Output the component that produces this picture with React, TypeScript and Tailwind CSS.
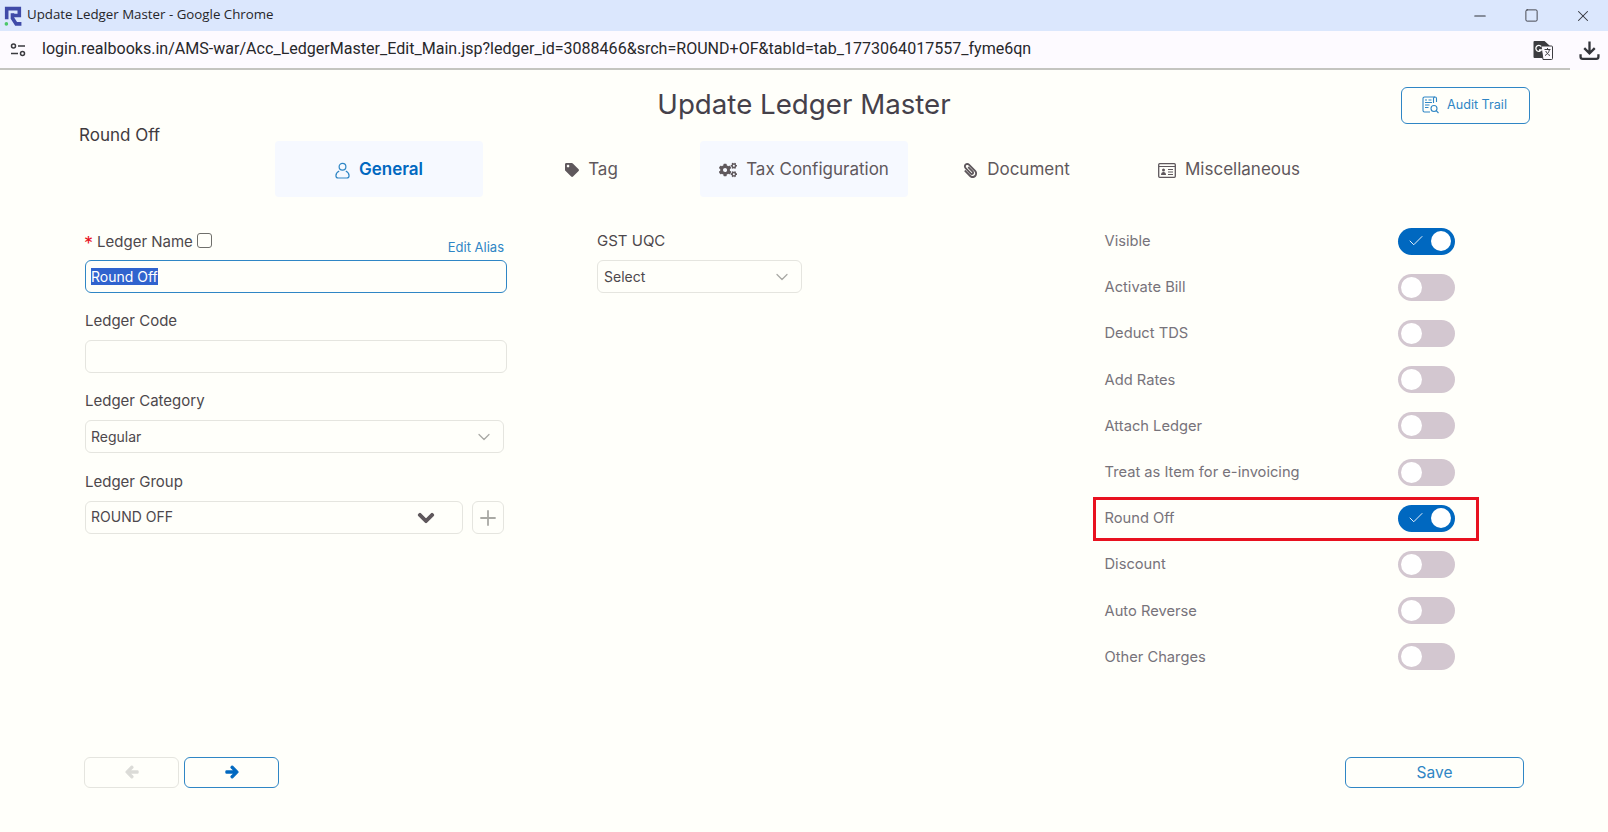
import React from "react";
import { ChevronDown, Check, Minus, Square, X, Plus } from "lucide-react";
import { FaTag, FaCogs, FaPaperclip, FaChevronDown, FaArrowLeft, FaArrowRight } from "react-icons/fa";

const tabs = [
  { label: "General", icon: <UserIcon />, active: true, shaded: true },
  { label: "Tag", icon: <FaTag className="w-[14px] h-[14px] text-[#5f585c]" /> },
  { label: "Tax Configuration", icon: <FaCogs className="w-[18px] h-[18px] text-[#5f585c]" />, shaded: true },
  { label: "Document", icon: <FaPaperclip className="w-[15px] h-[15px] text-[#5f585c] -scale-x-100" /> },
  { label: "Miscellaneous", icon: <CardIcon /> },
];

const switches = [
  { label: "Visible", on: true },
  { label: "Activate Bill" },
  { label: "Deduct TDS" },
  { label: "Add Rates" },
  { label: "Attach Ledger" },
  { label: "Treat as Item for e-invoicing" },
  { label: "Round Off", on: true, marked: true },
  { label: "Discount" },
  { label: "Auto Reverse" },
  { label: "Other Charges" },
];

function UserIcon() {
  return (
    <svg viewBox="0 0 16 18" className="w-[15px] h-[17px] text-[#2f86c5]" fill="none" stroke="currentColor" strokeWidth="1.3">
      <circle cx="8" cy="5" r="3.6" />
      <path d="M4.5 9.5C2.5 10.5 1 12.500 1 14.500c0 1.500 1 2.500 2.500 2.500h9c1.500 0 2.500-1 2.500-2.500 0-2-1.500-4-3.500-5" />
    </svg>
  );
}

function CardIcon() {
  return (
    <svg viewBox="0 0 18 15" className="w-[18px] h-[15px] text-[#5f585c]" fill="none" stroke="currentColor">
      <rect x="0.700" y="0.700" width="16.600" height="13.600" rx="1" strokeWidth="1.300" />
      <path d="M1 3.500h16" strokeWidth="1" />
      <circle cx="5.500" cy="7" r="1.500" fill="currentColor" stroke="none" />
      <path d="M3 12c0-2 1-3 2.500-3S8 10 8 12z" fill="currentColor" stroke="none" />
      <path d="M10 6.500h5M10 9h5M10 11.500h5" strokeWidth="1.100" />
    </svg>
  );
}

function Logo() {
  return (
    <svg viewBox="0 0 17 19" className="w-[18px] h-[20px]" fill="none" stroke="#3f4aa8" strokeWidth="3.400">
      <path d="M2.500 12.500V2.500h12v6.500H8" />
      <path d="M8 7v4.500l3.500 5.500h5" />
      <circle cx="2.200" cy="17" r="1.700" fill="#4cc76a" stroke="none" />
    </svg>
  );
}

function SiteInfoIcon() {
  return (
    <svg viewBox="0 0 16 14" className="w-[16px] h-[14px] text-[#3a3a3f]" fill="none" stroke="currentColor" strokeWidth="1.5">
      <circle cx="3.500" cy="3" r="2" />
      <path d="M8 3h7M1 10.500h7" />
      <circle cx="12.500" cy="10.500" r="2" />
    </svg>
  );
}

function TranslateIcon() {
  return (
    <svg viewBox="0 0 20 20" className="w-[20px] h-[20px]">
      <path d="M1.500 1h10l5 4.500V17a1 1 0 0 1-1 1H1.500a1 1 0 0 1-1-1V2a1 1 0 0 1 1-1z" fill="#3c3c40" />
      <path d="M8 6h10.500a1 1 0 0 1 1 1v11.500a1 1 0 0 1-1 1H10z" fill="#fdfaff" stroke="#3c3c40" strokeWidth="1" />
      <path d="M8.200 6.500a3 3 0 1 0 .2 3.500H6" fill="none" stroke="#fff" strokeWidth="1.300" />
      <path d="M11.500 9.500h6M14.500 8v1.500M16.500 9.500c-.6 3-2.500 5-4.500 6M12.800 11c.6 2 2.200 3.700 4.200 4.500" fill="none" stroke="#3c3c40" strokeWidth="1" />
    </svg>
  );
}

function DownloadIcon() {
  return (
    <svg viewBox="0 0 20 20" className="w-[21px] h-[21px] text-[#33343a]" fill="none" stroke="currentColor" strokeWidth="2.200">
      <path d="M10 1.500v11M5 7.800l5 5 5-5" />
      <path d="M1.500 13.500v2.500a2 2 0 0 0 2 2h13a2 2 0 0 0 2-2v-2.500" />
    </svg>
  );
}

function AuditIcon() {
  return (
    <svg viewBox="0 0 17 18" className="w-[17px] h-[18px] text-[#2f86c5]" fill="none" stroke="currentColor" strokeWidth="1.1">
      <path d="M11.500 7V2.500a1.500 1.500 0 0 1 3 0V6" />
      <path d="M13 1H2.500A1.500 1.500 0 0 0 1 2.500v12A1.500 1.500 0 0 0 2.500 16H8" />
      <path d="M3 4h2M6.500 4h3M3 6.500h7M3 9h4.500M3 11.500h3.500" />
      <circle cx="12" cy="12.500" r="3" />
      <path d="M14.200 14.700 16.500 17" />
    </svg>
  );
}

function Label({ children }: { children: React.ReactNode }) {
  return <div className="h-5 leading-5 text-[15px] text-[#4d484c]">{children}</div>;
}

function SelectBox({ value, wide }: { value: string; wide?: string }) {
  return (
    <div className={`${wide} h-[33px] mt-[9px] px-[6px] flex items-center justify-between border border-[#e5e5df] rounded-[6px] text-sm text-[#4d484c]`}>
      <span>{value}</span>
      <ChevronDown className="w-[20px] h-[20px] mr-[3px] text-[#a9a9a4]" strokeWidth={1.5} />
    </div>
  );
}

function Toggle({ on }: { on?: boolean }) {
  if (on) {
    return (
      <div className="w-[57px] h-[27px] rounded-full bg-[#0068c0] flex items-center justify-between pl-[9px] pr-[4px]">
        <Check className="w-[18px] h-[18px] text-white" strokeWidth={1.2} />
        <div className="w-[20px] h-[20px] rounded-full bg-white" />
      </div>
    );
  }
  return (
    <div className="w-[57px] h-[27px] rounded-full bg-[#d3c7d0] flex items-center pl-[3px]">
      <div className="w-[21px] h-[21px] rounded-full bg-white" />
    </div>
  );
}

export default function App() {
  return (
    <div className="w-[1608px] h-[832px] overflow-hidden flex flex-col bg-[#fffffa] font-['Inter',sans-serif]">
      {/* Chrome window bar */}
      <div className="h-[31px] flex items-center bg-[#dbe7fd] pl-[4px] font-['Open_Sans',sans-serif] text-[13.300px] text-[#26262a]">
        <Logo />
        <span className="ml-[5px] -mt-[2px]">Update Ledger Master - Google Chrome</span>
        <div className="ml-auto flex items-center gap-[35px] pr-[16px] text-[#33343a]">
          <Minus className="w-[18px] h-[18px]" strokeWidth={1.4} />
          <Square className="w-[15px] h-[15px]" strokeWidth={1.4} />
          <X className="w-[18px] h-[18px]" strokeWidth={1.4} />
        </div>
      </div>
      <div className="h-[39px] flex items-center bg-[#fdfaff] border-b-2 border-[#c4c4c0]">
        <div className="ml-[10px] mr-[16px]">
          <SiteInfoIcon />
        </div>
        <span className="font-['Roboto',sans-serif] text-[16.060px] text-[#27272b]">
          login.realbooks.in/AMS-war/Acc_LedgerMaster_Edit_Main.jsp?ledger_id=3088466&amp;srch=ROUND+OF&amp;tabId=tab_1773064017557_fyme6qn
        </span>
        <div className="ml-auto mr-[55px]">
          <TranslateIcon />
        </div>
      </div>
      <div className="absolute left-[1570px] top-[31px] w-[38px] h-[39px] bg-[#fdfaff] flex items-center justify-center">
        <DownloadIcon />
      </div>

      <main className="flex-1 flex flex-col">
        {/* Title row */}
        <div className="mt-[15px] h-[37px] grid grid-cols-[1fr_auto_1fr] items-center px-[78px]">
          <div />
          <h1 className="text-[27.700px] text-[#45414a] -mt-[1px]">Update Ledger Master</h1>
          <div className="flex justify-end">
            <button className="w-[129px] h-[37px] flex items-center justify-center gap-[8px] pr-[2px] border border-[#2f86c5] rounded-[6px] text-[12.600px] text-[#2f86c5]">
              <AuditIcon />
              Audit Trail
            </button>
          </div>
        </div>

        {/* Name and tabs */}
        <div className="flex pl-[79px]">
          <div className="w-[196px] mt-[3px] h-5 leading-5 text-[17px] text-[#3f3b40]">Round Off</div>
          <div className="mt-[19px] flex gap-[4.500px]">
            {tabs.map((t) => (
              <div
                key={t.label}
                className={`w-[208px] h-[56px] pt-[2px] flex items-center justify-center gap-[9px] rounded-[4px] text-[17px] ${
                  t.shaded ? "bg-[#f6f9ff]" : ""
                } ${t.active ? "text-[#0068c0] font-semibold" : "text-[#5f585c]"}`}
              >
                {t.icon}
                {t.label}
              </div>
            ))}
          </div>
        </div>

        <div className="flex pl-[85px]">
          {/* Left fields */}
          <div className="w-[422px] pt-[35px]">
            <div className="flex items-center h-5 text-[15px] text-[#4d484c]">
              <span className="text-[#e8111f] text-[18px] mt-[2px] mr-[4px] -ml-[1px]">*</span>
              Ledger Name
              <span className="ml-[4px] -mt-[3px] w-[15px] h-[15px] border border-[#6f6f6b] rounded-[3px]" />
              <span className="ml-auto mt-[11px] mr-[3px] text-[13px] text-[#2f86c5]">Edit Alias</span>
            </div>
            <div className="h-[33px] mt-[8px] px-[5px] flex items-center border-[1.500px] border-[#2f86c5] rounded-[6px]">
              <span className="bg-[#3063ce] text-white text-sm leading-[17px]">Round Off</span>
            </div>
            <div className="mt-[18px]">
              <Label>Ledger Code</Label>
            </div>
            <div className="h-[33px] mt-[9px] border border-[#e5e5df] rounded-[6px]" />
            <div className="mt-[18px]">
              <Label>Ledger Category</Label>
            </div>
            <SelectBox value="Regular" wide="w-[419px] pl-[5px]" />
            <div className="mt-[19px]">
              <Label>Ledger Group</Label>
            </div>
            <div className="mt-[9px] flex gap-[9px]">
              <div className="w-[378px] h-[33px] pl-[5px] pr-[6px] flex items-center justify-between border border-[#e5e5df] rounded-[6px] text-sm text-[#4d484c]">
                <span className="-mt-[1px]">ROUND OFF</span>
                <FaChevronDown className="w-[18px] h-[18px] mr-[21px] text-[#5f585c] stroke-[30]" />
              </div>
              <div className="w-[32px] h-[33px] flex items-center justify-center border border-[#e5e5df] rounded-[6px]">
                <Plus className="w-[24px] h-[24px] text-[#a9a9a4]" strokeWidth={1.8} />
              </div>
            </div>
          </div>

          {/* GST */}
          <div className="ml-[90px] w-[205px] pt-[34px]">
            <Label>GST UQC</Label>
            <SelectBox value="Select" />
          </div>

          {/* Switches */}
          <div className="ml-[302.500px] w-[350.500px] pt-[21px]">
            {switches.map((s) => (
              <div key={s.label} className="relative h-[46.200px] flex items-center justify-between text-[14.700px] text-[#77737a]">
                <span>{s.label}</span>
                <Toggle on={s.on} />
                {s.marked && <div className="absolute left-[-12px] right-[-23.500px] top-[2px] bottom-[0px] border-[3px] border-[#e8111f]" />}
              </div>
            ))}
          </div>
        </div>

        {/* Footer buttons */}
        <div className="mt-auto mb-[44px] px-[84px] flex items-center">
          <button className="w-[95px] h-[31px] flex items-center justify-center border border-[#e5e5df] rounded-[6px]">
            <FaArrowLeft className="w-[14px] h-[14px] text-[#dbdbd7] stroke-[40] -mt-[2px]" />
          </button>
          <button className="ml-[5px] w-[95px] h-[31px] flex items-center justify-center border border-[#2f86c5] rounded-[6px]">
            <FaArrowRight className="w-[14px] h-[14px] text-[#0068c0] stroke-[40] -mt-[2px]" />
          </button>
          <button className="ml-auto w-[179px] h-[31px] border border-[#2f86c5] rounded-[6px] text-[15.500px] text-[#2f86c5]">
            Save
          </button>
        </div>
      </main>
    </div>
  );
}
